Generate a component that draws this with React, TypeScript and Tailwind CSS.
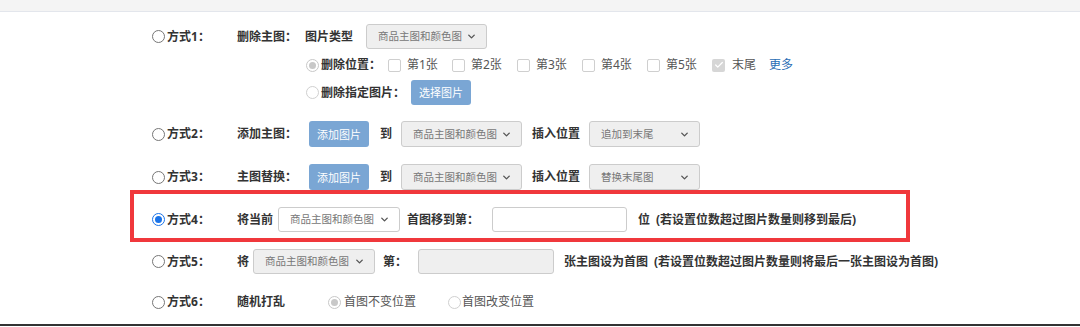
import { ChevronDown, Check } from "lucide-react";

function Radio({ on, disabled }: { on?: boolean; disabled?: boolean }) {
  if (on && !disabled) {
    return (
      <span className="w-[13px] h-[13px] rounded-full border-[1.5px] border-[#1a73e8] bg-white flex items-center justify-center shrink-0">
        <span className="block w-[7px] h-[7px] rounded-full bg-[#1a73e8]" />
      </span>
    );
  }
  if (on && disabled) {
    return (
      <span className="w-[13px] h-[13px] rounded-full border border-[#c8c8c8] bg-white flex items-center justify-center shrink-0">
        <span className="block w-[7px] h-[7px] rounded-full bg-[#c8c8c8]" />
      </span>
    );
  }
  return (
    <span
      className={
        disabled
          ? "block w-[13px] h-[13px] rounded-full border border-[#d0d0d0] bg-white shrink-0"
          : "block w-[13px] h-[13px] rounded-full border border-[#767676] bg-white shrink-0"
      }
    />
  );
}

function Box({ on }: { on?: boolean }) {
  if (on) {
    return (
      <span className="w-[13px] h-[13px] rounded-[2px] bg-[#d6d6d6] flex items-center justify-center shrink-0">
        <Check size={10} strokeWidth={3} color="#fff" />
      </span>
    );
  }
  return <span className="block w-[13px] h-[13px] rounded-[2px] border border-[#cfcfcf] bg-white shrink-0" />;
}

function Sel({ className, text }: { className: string; text: string }) {
  return (
    <div
      className={
        "h-full flex items-center justify-between border border-[#cccccc] rounded-[3px] pl-[11px] pr-[9px] text-[10.5px] text-[#777] font-normal " +
        className
      }
    >
      <span>{text}</span>
      <ChevronDown size={11} strokeWidth={3} color="#555" />
    </div>
  );
}

function Btn({ text }: { text: string }) {
  return (
    <div className="w-[60px] h-full bg-[#7aa6d4] rounded-[3px] text-white text-[11px] font-normal flex items-center justify-center">
      {text}
    </div>
  );
}

function Way({ n, on }: { n: number; on?: boolean }) {
  return (
    <div className="w-[85px] h-full flex items-center gap-[2px] font-bold">
      <Radio on={on} />
      <span>方式{n}：</span>
    </div>
  );
}

function Pos({ label, first }: { label: string; first?: boolean }) {
  return (
    <div className={first ? "w-[64px] flex items-center" : "w-[65px] flex items-center"}>
      <Box />
      <span className="ml-[6px] text-[#555]">{label}</span>
    </div>
  );
}

export default function App() {
  return (
    <div
      className="w-[1080px] h-[327px] bg-white overflow-hidden text-[12px] text-[#333] leading-none"
      style={{ fontFamily: '"Noto Sans", "Noto Sans CJK SC", sans-serif' }}
    >
      <div className="h-[12px] bg-[#f4f4f4] border-b border-[#e3e6ec]" />

      <div className="pt-[12px]">
        {/* 方式1 */}
        <div className="ml-[152px] flex">
          <div className="h-[25px]">
            <Way n={1} />
          </div>
          <div className="w-[68px] h-[25px] flex items-center font-bold">删除主图：</div>
          <div className="flex flex-col">
            <div className="h-[25px] flex items-center">
              <span className="w-[61px] font-bold">图片类型</span>
              <Sel className="w-[121px] bg-[#efefef]" text="商品主图和颜色图" />
            </div>
            <div className="mt-[4px] h-[24px] flex items-center">
              <span className="ml-[1px]">
                <Radio on disabled />
              </span>
              <span className="ml-[2px] w-[67px] font-bold">删除位置：</span>
              <Pos label="第1张" first />
              <Pos label="第2张" />
              <Pos label="第3张" />
              <Pos label="第4张" />
              <Pos label="第5张" />
              <div className="flex items-center">
                <Box on />
                <span className="ml-[7px] text-[#555]">末尾</span>
              </div>
              <span className="ml-[13px] text-[#2a6db5]">更多</span>
            </div>
            <div className="mt-[3px] h-[25px] flex items-center">
              <span className="ml-[1px]">
                <Radio disabled />
              </span>
              <span className="ml-[2px] w-[90px] font-bold">删除指定图片：</span>
              <Btn text="选择图片" />
            </div>
          </div>
        </div>

        {/* 方式2 */}
        <div className="ml-[152px] mt-[16px] h-[26px] flex items-center">
          <Way n={2} />
          <span className="w-[72px] font-bold">添加主图：</span>
          <Btn text="添加图片" />
          <span className="ml-[11px] font-bold">到</span>
          <Sel className="ml-[9px] w-[121px] bg-[#efefef]" text="商品主图和颜色图" />
          <span className="ml-[10px] font-bold">插入位置</span>
          <Sel className="ml-[9px] w-[111px] bg-[#efefef]" text="追加到末尾" />
        </div>

        {/* 方式3 */}
        <div className="ml-[152px] mt-[17px] h-[26px] flex items-center">
          <Way n={3} />
          <span className="w-[72px] font-bold">主图替换：</span>
          <Btn text="添加图片" />
          <span className="ml-[11px] font-bold">到</span>
          <Sel className="ml-[9px] w-[121px] bg-[#efefef]" text="商品主图和颜色图" />
          <span className="ml-[10px] font-bold">插入位置</span>
          <Sel className="ml-[9px] w-[111px] bg-[#efefef]" text="替换末尾图" />
        </div>

        {/* 方式4 (highlighted) */}
        <div className="ml-[130px] w-[780px] h-[52px] border-4 border-[#f0383c] pl-[18px] pt-[13px]">
          <div className="h-[25px] flex items-center">
            <Way n={4} on />
            <span className="w-[41px] font-bold">将当前</span>
            <Sel className="w-[122px] bg-white" text="商品主图和颜色图" />
            <span className="ml-[7px] w-[85px] font-bold">首图移到第：</span>
            <div className="w-[135px] h-full border border-[#cccccc] rounded-[3px] bg-white" />
            <span className="ml-[11px] font-bold">位</span>
            <span className="ml-[6px] font-bold">(若设置位数超过图片数量则移到最后)</span>
          </div>
        </div>

        {/* 方式5 */}
        <div className="ml-[152px] mt-[7px] h-[25px] flex items-center">
          <Way n={5} />
          <span className="w-[16px] font-bold">将</span>
          <Sel className="w-[122px] bg-[#efefef]" text="商品主图和颜色图" />
          <span className="ml-[8px] w-[35px] font-bold">第：</span>
          <div className="w-[136px] h-full border border-[#cccccc] rounded-[3px] bg-[#efefef]" />
          <span className="ml-[10px] font-bold">张主图设为首图</span>
          <span className="ml-[6px] font-bold">(若设置位数超过图片数量则将最后一张主图设为首图)</span>
        </div>

        {/* 方式6 */}
        <div className="ml-[152px] mt-[16px] h-[24px] flex items-center">
          <Way n={6} />
          <span className="w-[91px] font-bold">随机打乱</span>
          <Radio on disabled />
          <span className="ml-[3px] text-[#555]">首图不变位置</span>
          <span className="ml-[32px]">
            <Radio disabled />
          </span>
          <span className="ml-[1px] text-[#555]">首图改变位置</span>
        </div>

        <div className="mt-[10px] h-[2px] bg-[#333]" />
      </div>
    </div>
  );
}
